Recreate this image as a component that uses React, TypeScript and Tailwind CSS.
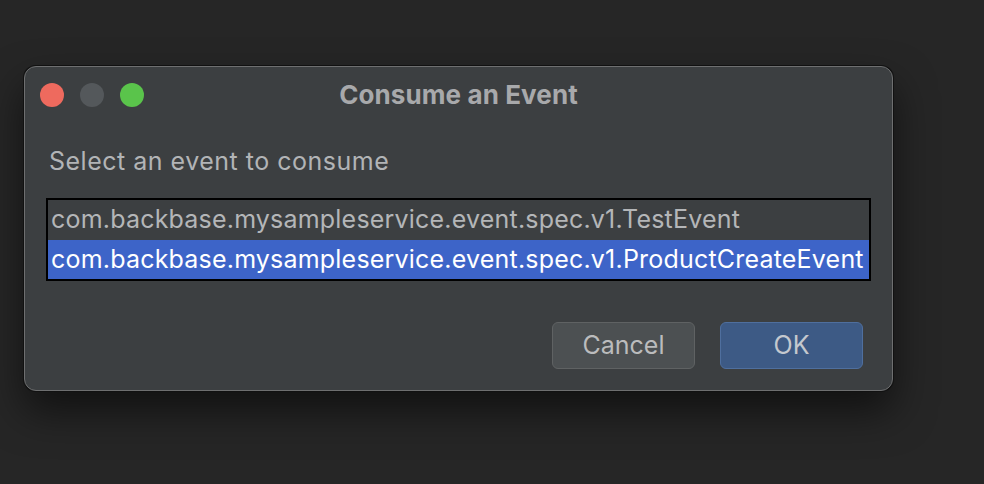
import React from "react";

export default function App() {
  return (
    <div
      className="w-[984px] h-[484px] overflow-hidden bg-[#262626] pl-[24px] pt-[66px]"
      style={{ fontFamily: "Inter, 'Noto Sans', sans-serif" }}
    >
      <div className="w-[869px] h-[325px] rounded-[12px] bg-[#3c3f41] border border-[#6e6f70] shadow-[0_0_0_1px_#111,0_20px_40px_rgba(0,0,0,0.55)] flex flex-col">
        <div className="relative h-[55px] flex items-center pl-[15px] gap-[16px]">
          <span className="w-[24px] h-[24px] rounded-full bg-[#ee6a5e]" />
          <span className="w-[24px] h-[24px] rounded-full bg-[#54585b]" />
          <span className="w-[24px] h-[24px] rounded-full bg-[#5ac44b]" />
          <div className="absolute inset-0 flex items-center justify-center">
            <span className="text-[26px] font-bold text-[#a8a9ab] tracking-[0.1px]">Consume an Event</span>
          </div>
        </div>
        <div className="px-[21px] pt-[24px]">
          <div className="pl-[3px] text-[25px] leading-[30px] text-[#b2b4b6] tracking-[0.5px]">Select an event to consume</div>
          <div className="mt-[22px] border-2 border-black h-[83px] flex flex-col">
            <div className="h-[40px] flex items-center pl-[3px] text-[25px] tracking-[0.2px] text-[#b4b6b8]">
              com.backbase.mysampleservice.event.spec.v1.TestEvent
            </div>
            <div className="h-[39px] flex items-center pl-[3px] text-[25px] tracking-[0.2px] text-white bg-[#3d64c8]">
              com.backbase.mysampleservice.event.spec.v1.ProductCreateEvent
            </div>
          </div>
        </div>
        <div className="flex justify-end gap-[25px] pr-[29px] mt-[41px]">
          <button className="w-[143px] h-[47px] rounded-[6px] bg-[#4c5052] border border-[#5f6263] text-[25px] text-[#bbbcbd]">
            Cancel
          </button>
          <button className="w-[143px] h-[47px] rounded-[6px] bg-[#3d5a85] border border-[#4f6f9e] text-[25px] text-[#c4c8ce]">
            OK
          </button>
        </div>
      </div>
    </div>
  );
}
